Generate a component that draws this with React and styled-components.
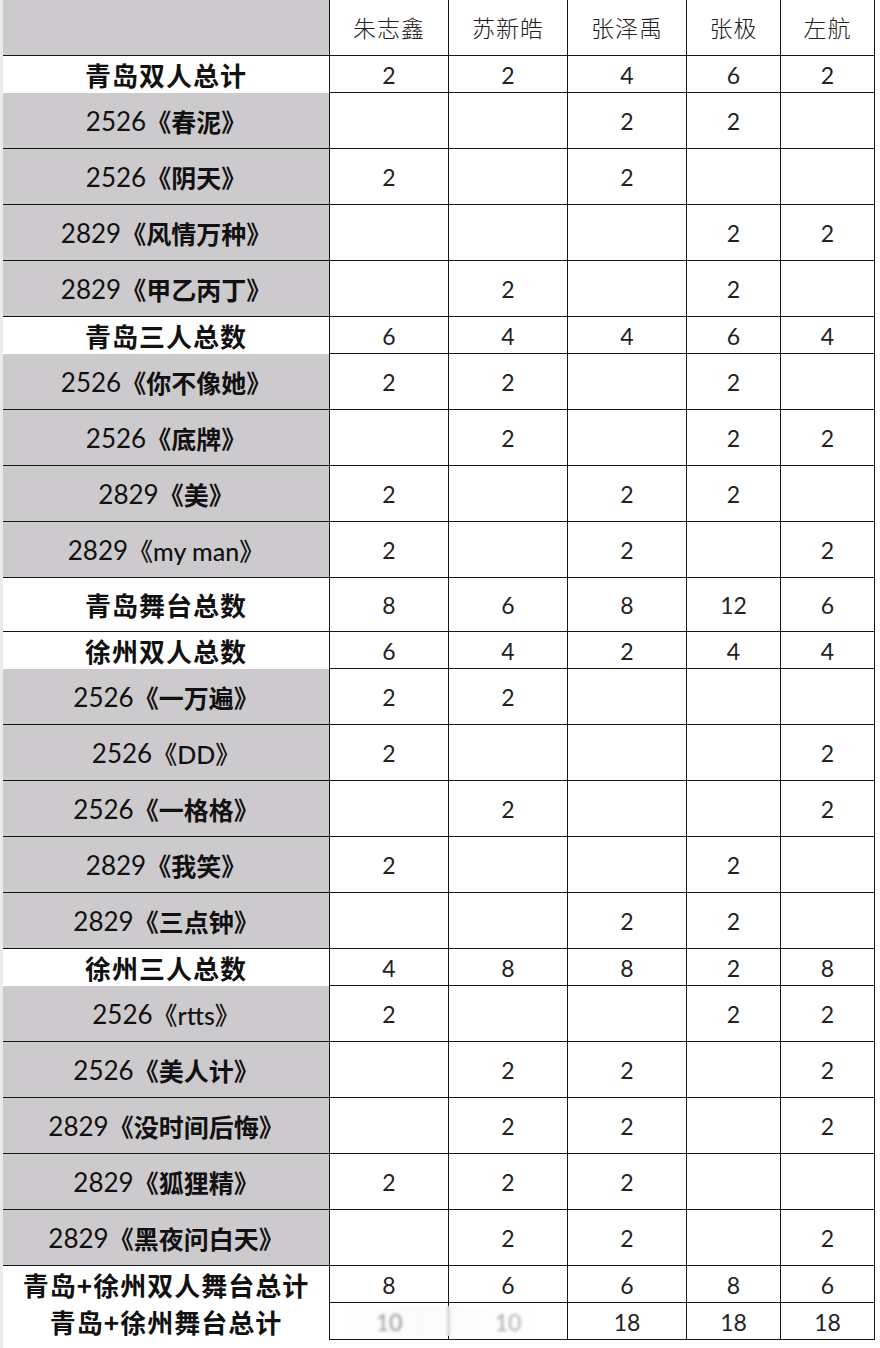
import React from 'react';
import styled, { createGlobalStyle } from 'styled-components';

const GlobalStyle = createGlobalStyle`
  html, body {
    margin: 0;
    padding: 0;
    background: #ffffff;
  }
  body {
    font-family: Lato, "Noto Sans CJK SC", sans-serif;
    color: #111;
  }
`;

const names = ['朱志鑫', '苏新皓', '张泽禹', '张极', '左航'];

// kind: 'sum' = white summary row, 'song' = gray song row, 'stage' = taller summary
const rows = [
  { kind: 'sum', label: '青岛双人总计', v: [2, 2, 4, 6, 2] },
  { kind: 'song', code: '2526', title: '《春泥》', v: ['', '', 2, 2, ''] },
  { kind: 'song', code: '2526', title: '《阴天》', v: [2, '', 2, '', ''] },
  { kind: 'song', code: '2829', title: '《风情万种》', v: ['', '', '', 2, 2] },
  { kind: 'song', code: '2829', title: '《甲乙丙丁》', v: ['', 2, '', 2, ''] },
  { kind: 'sum', label: '青岛三人总数', v: [6, 4, 4, 6, 4] },
  { kind: 'song', code: '2526', title: '《你不像她》', v: [2, 2, '', 2, ''] },
  { kind: 'song', code: '2526', title: '《底牌》', v: ['', 2, '', 2, 2] },
  { kind: 'song', code: '2829', title: '《美》', v: [2, '', 2, 2, ''] },
  { kind: 'song', code: '2829', title: '《my man》', latin: true, v: [2, '', 2, '', 2] },
  { kind: 'stage', label: '青岛舞台总数', v: [8, 6, 8, 12, 6] },
  { kind: 'sum', label: '徐州双人总数', v: [6, 4, 2, 4, 4] },
  { kind: 'song', code: '2526', title: '《一万遍》', v: [2, 2, '', '', ''] },
  { kind: 'song', code: '2526', title: '《DD》', latin: true, v: [2, '', '', '', 2] },
  { kind: 'song', code: '2526', title: '《一格格》', v: ['', 2, '', '', 2] },
  { kind: 'song', code: '2829', title: '《我笑》', v: [2, '', '', 2, ''] },
  { kind: 'song', code: '2829', title: '《三点钟》', v: ['', '', 2, 2, ''] },
  { kind: 'sum', label: '徐州三人总数', v: [4, 8, 8, 2, 8] },
  { kind: 'song', code: '2526', title: '《rtts》', latin: true, v: [2, '', '', 2, 2] },
  { kind: 'song', code: '2526', title: '《美人计》', v: ['', 2, 2, '', 2] },
  { kind: 'song', code: '2829', title: '《没时间后悔》', v: ['', 2, 2, '', 2] },
  { kind: 'song', code: '2829', title: '《狐狸精》', v: [2, 2, 2, '', ''] },
  { kind: 'song', code: '2829', title: '《黑夜问白天》', v: ['', 2, 2, '', 2] },
  { kind: 'sum', label: '青岛+徐州双人舞台总计', v: [8, 6, 6, 8, 6] },
  { kind: 'sum', label: '青岛+徐州舞台总计', v: [10, 10, 18, 18, 18] },
];

const heights = { head: 56, sum: 37, song: 56, stage: 54 };

export default function App() {
  return (
    <>
      <GlobalStyle />
      <Page>
        <Table>
          <Row $h={heights.head}>
            <LabelCell $gray />
            {names.map((n) => (
              <HeadCell key={n}>{n}</HeadCell>
            ))}
          </Row>
          {rows.map((r, i) => (
            <Row key={i} $h={heights[r.kind]}>
              {r.kind === 'song' ? (
                <LabelCell $gray>
                  <Code>{r.code}</Code>
                  <Title $latin={r.latin}>{r.title}</Title>
                </LabelCell>
              ) : (
                <LabelCell>
                  <SumLabel>{r.label}</SumLabel>
                </LabelCell>
              )}
              {r.v.map((val, j) => (
                <ValueCell key={j}>{val}</ValueCell>
              ))}
            </Row>
          ))}
        </Table>
        <Watermark />
      </Page>
    </>
  );
}

const Page = styled.div`
  position: relative;
  width: 880px;
  height: 1348px;
  border-left: 3px solid #ebebeb;
  box-sizing: border-box;
  overflow: hidden;
`;

const Table = styled.div`
  display: flex;
  flex-direction: column;
  width: 872px;
`;

const Row = styled.div`
  display: grid;
  grid-template-columns: 327px 119px 119px 119px 94px 94px;
  height: ${(p) => p.$h}px;
  box-sizing: border-box;
  border-bottom: 1px solid #161616;
`;

const Cell = styled.div`
  display: flex;
  align-items: center;
  justify-content: center;
  border-right: 1px solid #161616;
  box-sizing: border-box;
  white-space: nowrap;
`;

const LabelCell = styled(Cell)`
  background: ${(p) => (p.$gray ? '#cdcacd' : '#ffffff')};
`;

const HeadCell = styled(Cell)`
  font-family: "Noto Sans CJK SC", sans-serif;
  font-weight: 300;
  font-size: 23px;
  color: #222;
  letter-spacing: 1px;
  padding-bottom: 2px;
`;

const ValueCell = styled(Cell)`
  font-family: Lato, "Open Sans", sans-serif;
  font-size: 23px;
  font-weight: 400;
  color: #222;
`;

const SumLabel = styled.span`
  font-family: "Noto Sans CJK SC", sans-serif;
  font-weight: 700;
  font-size: 26px;
  letter-spacing: 1px;
  color: #111;
`;

const Code = styled.span`
  font-family: Lato, sans-serif;
  font-size: 26px;
  font-weight: 400;
  color: #111;
`;

const Title = styled.span`
  font-family: ${(p) => (p.$latin ? 'Lato, "Noto Sans CJK SC"' : '"Noto Sans CJK SC"')}, sans-serif;
  font-size: 25px;
  font-weight: ${(p) => (p.$latin ? 500 : 600)};
  color: #111;
`;

const Watermark = styled.div`
  position: absolute;
  left: 333px;
  top: 1306px;
  width: 210px;
  height: 30px;
  background: linear-gradient(
    90deg,
    rgba(255, 255, 255, 0.75),
    rgba(245, 245, 245, 0.45) 40%,
    rgba(255, 255, 255, 0.7)
  );
  backdrop-filter: blur(1.5px);
  pointer-events: none;
`;
